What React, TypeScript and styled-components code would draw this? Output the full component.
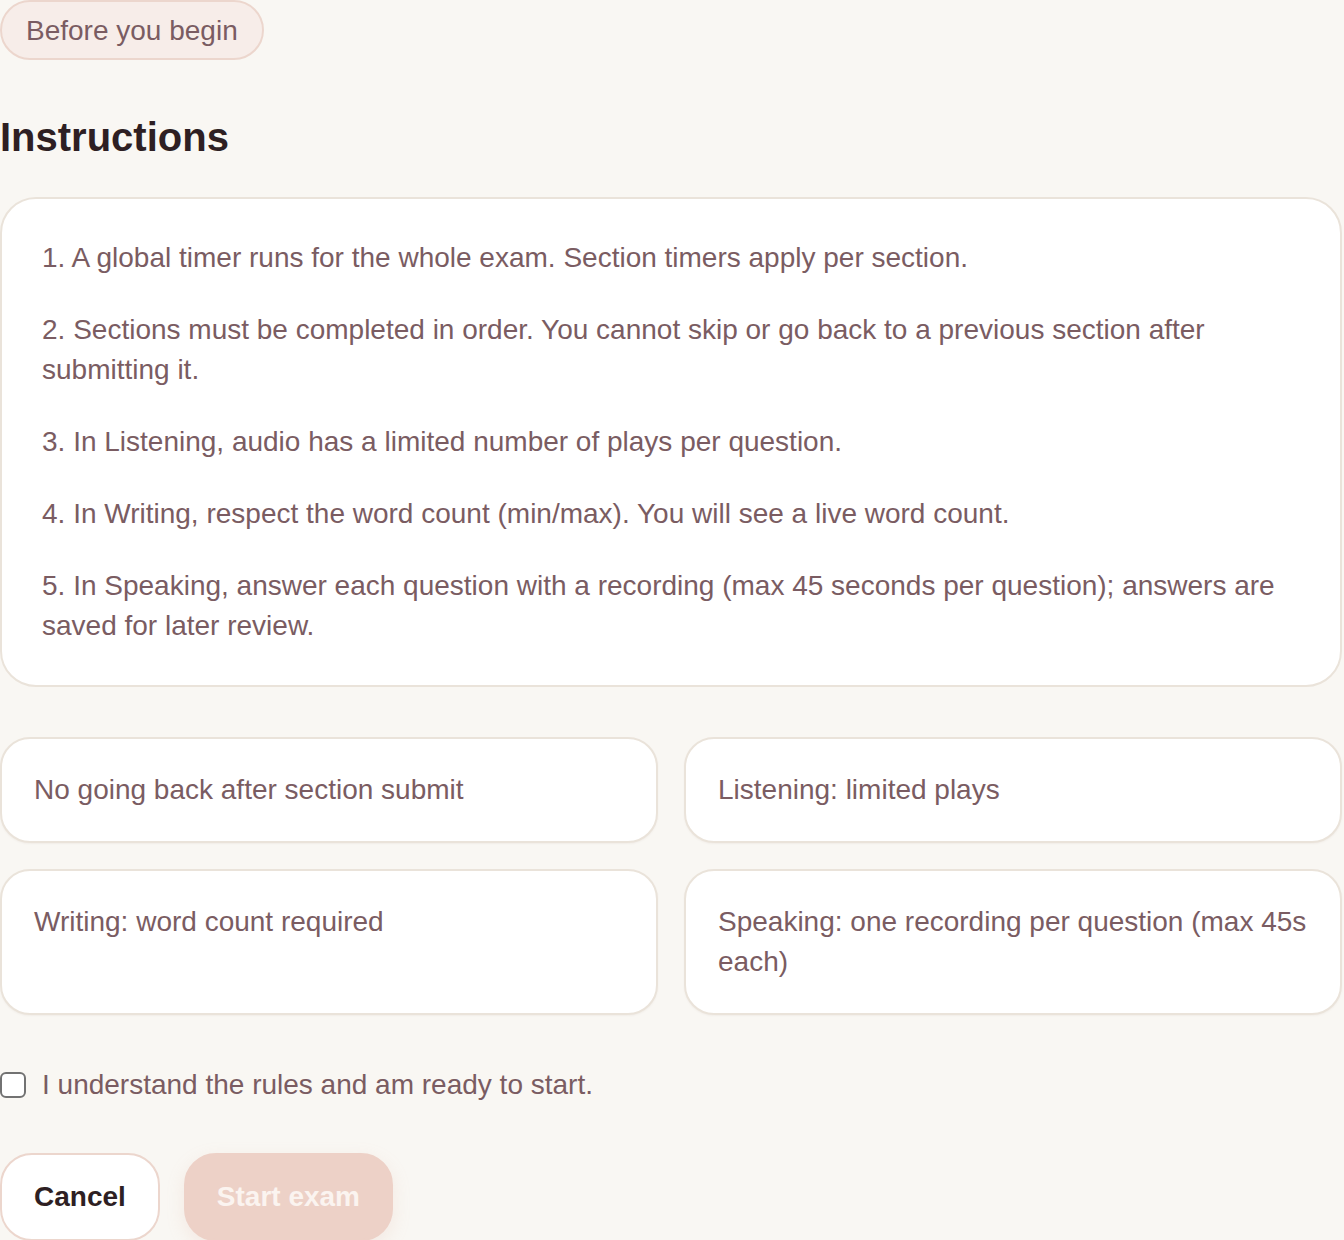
import styled, { createGlobalStyle } from "styled-components";

const GlobalStyle = createGlobalStyle`
  html, body {
    margin: 0;
    padding: 0;
    background: #f9f7f3;
  }

  body {
    font-family: "Liberation Sans", Arial, sans-serif;
    color: #7a5c62;
  }
`;

const instructions = [
  "1. A global timer runs for the whole exam. Section timers apply per section.",
  "2. Sections must be completed in order. You cannot skip or go back to a previous section after submitting it.",
  "3. In Listening, audio has a limited number of plays per question.",
  "4. In Writing, respect the word count (min/max). You will see a live word count.",
  "5. In Speaking, answer each question with a recording (max 45 seconds per question); answers are saved for later review.",
];

const rules = [
  "No going back after section submit",
  "Listening: limited plays",
  "Writing: word count required",
  "Speaking: one recording per question (max 45s each)",
];

const App: React.FC = () => {
  return (
    <>
      <GlobalStyle />
      <Page>
        <Badge>Before you begin</Badge>
        <Heading>Instructions</Heading>

        <InstructionCard>
          {instructions.map((item) => (
            <Paragraph key={item}>{item}</Paragraph>
          ))}
        </InstructionCard>

        <RuleGrid>
          {rules.map((rule) => (
            <RuleCard key={rule}>{rule}</RuleCard>
          ))}
        </RuleGrid>

        <ConfirmRow>
          <Checkbox type="checkbox" />
          <span>I understand the rules and am ready to start.</span>
        </ConfirmRow>

        <Actions>
          <Button>Cancel</Button>
          <Button primary disabled>
            Start exam
          </Button>
        </Actions>
      </Page>
    </>
  );
};

export default App;

const Page = styled.div`
  width: 1342px;
  display: flex;
  flex-direction: column;
  align-items: flex-start;
  font-size: 28px;
  line-height: 40px;
`;

const Badge = styled.div`
  padding: 11px 24px 9px;
  line-height: 36px;
  border: 2px solid #ecd6cd;
  border-radius: 999px;
  background: #f7ede9;
  color: #7a5c62;
`;

const Heading = styled.h1`
  margin: 53px 0 36px;
  font-size: 40px;
  line-height: 48px;
  font-weight: 700;
  color: #2e1f23;
`;

const InstructionCard = styled.div`
  box-sizing: border-box;
  width: 100%;
  padding: 39px 40px;
  border: 2px solid #eae3da;
  border-radius: 36px;
  background: #ffffff;
  display: flex;
  flex-direction: column;
  gap: 32px;
`;

const Paragraph = styled.p`
  margin: 0;
`;

const RuleGrid = styled.div`
  width: 100%;
  margin-top: 50px;
  display: grid;
  grid-template-columns: 1fr 1fr;
  gap: 26px;
`;

const RuleCard = styled.div`
  padding: 31px 32px;
  border: 2px solid #eae3da;
  border-radius: 30px;
  background: #ffffff;
  box-shadow: 0 1px 2px rgba(120, 90, 70, 0.06);
`;

const ConfirmRow = styled.label`
  margin-top: 50px;
  display: flex;
  align-items: center;
  gap: 16px;
`;

const Checkbox = styled.input`
  appearance: none;
  margin: 0;
  width: 26px;
  height: 26px;
  border: 2px solid #727272;
  border-radius: 6px;
  background: #ffffff;
`;

const Actions = styled.div`
  margin-top: 48px;
  display: flex;
  gap: 24px;
`;

const Button = styled.button<{ primary?: boolean }>`
  padding: 22px ${(p) => (p.primary ? "31px" : "32px")};
  font-family: inherit;
  font-size: 28px;
  line-height: 40px;
  font-weight: 700;
  border-radius: 32px;
  border: 2px solid ${(p) => (p.primary ? "#edd1c7" : "#ecd6cd")};
  background: ${(p) => (p.primary ? "#edd1c7" : "#ffffff")};
  color: ${(p) => (p.primary ? "#fbf4f0" : "#2e1f23")};
  box-shadow: ${(p) =>
    p.primary ? "0 6px 18px rgba(220, 170, 150, 0.18)" : "none"};
  cursor: pointer;
`;
